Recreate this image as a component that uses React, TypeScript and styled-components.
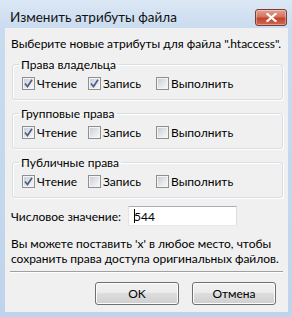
import React from "react";
import styled, { createGlobalStyle } from "styled-components";

const Global = createGlobalStyle`
  html, body { margin: 0; padding: 0; background: #c6d9ee; }
  * { box-sizing: border-box; }
`;

const FONT = `Lato, "Noto Sans", sans-serif`;

const Window = styled.div`
  width: 292px;
  height: 317px;
  display: flex;
  flex-direction: column;
  padding: 0 4px 5px 5px;
  background: linear-gradient(180deg, #dbe7f4 0px, #c9dbef 30px, #bfd4ec 100%);
  font-family: ${FONT};
  font-size: 12px;
  color: #000;
  white-space: nowrap;
`;

const TitleBar = styled.div`
  height: 28px;
  flex: none;
  display: flex;
  justify-content: space-between;
  align-items: flex-start;
  padding: 9px 1px 0 5px;
`;

const Title = styled.div`
  line-height: 17px;
  font-size: 13.5px;
  color: #111;
`;

const CloseButton = styled.div`
  width: 32px;
  height: 17px;
  border: 1px solid #7a3b3b;
  border-radius: 3px;
  background: linear-gradient(180deg, #e4a192 0%, #d4735f 45%, #c2432c 55%, #cf6a52 100%);
  display: flex;
  align-items: center;
  justify-content: center;
  box-shadow: inset 0 0 0 1px rgba(255, 255, 255, 0.35);
`;

const Client = styled.div`
  flex: 1;
  display: flex;
  flex-direction: column;
  background: #f0f0f0;
  padding: 8px 5px 0 6px;
`;

const Text = styled.div`
  line-height: 15px;
`;

const Group = styled.fieldset`
  margin: 6px 0 0 1px;
  padding: 4px 8px 8px 9px;
  border: 1px solid #d5dfe5;
  border-radius: 3px;
  box-shadow: inset 1px 1px 0 #fff, 1px 1px 0 #fff;
`;

const Legend = styled.legend`
  padding: 0 2px;
  margin-left: -3px;
  line-height: 15px;
`;

const CheckRow = styled.div`
  display: grid;
  grid-template-columns: 66px 68px auto;
`;

const CheckItem = styled.label`
  display: flex;
  align-items: center;
  gap: 2px;
  line-height: 15px;
`;

const Box = styled.span`
  width: 13px;
  height: 13px;
  flex: none;
  border: 1px solid #8e8f8f;
  background: #f4f4f4;
  display: flex;
  align-items: center;
  justify-content: center;
`;

const BoxInner = styled.span`
  width: 11px;
  height: 11px;
  border: 1px solid #f4f4f4;
  background: linear-gradient(135deg, #cbcfd5 0%, #e6e8eb 60%, #f6f6f6 100%);
  display: flex;
  align-items: center;
  justify-content: center;
`;

const ValueRow = styled.div`
  display: flex;
  align-items: center;
  margin-top: 8px;
`;

const ValueLabel = styled.div`
  width: 117px;
  line-height: 15px;
`;

const Input = styled.div`
  width: 109px;
  height: 20px;
  background: #fff;
  border: 1px solid #abadb3;
  border-color: #abadb3 #dbdfe6 #e3e9ef #e2e3ea;
  display: flex;
  align-items: center;
  padding-left: 5px;
  line-height: 15px;
`;

const Caret = styled.span`
  width: 1px;
  height: 14px;
  background: #000;
  margin-right: -1px;
`;

const Hint = styled.div`
  margin-top: 10px;
  line-height: 15px;
`;

const Separator = styled.div`
  margin: 5px 0 0 -1px;
  height: 2px;
  border-top: 1px solid #a0a0a0;
  border-bottom: 1px solid #fff;
  width: 273px;
`;

const Buttons = styled.div`
  display: flex;
  justify-content: flex-end;
  gap: 13px;
  margin-top: 9px;
  padding-right: 7px;
`;

const Button = styled.div`
  width: 84px;
  height: 23px;
  border: 1px solid #707070;
  border-radius: 3px;
  background: linear-gradient(180deg, #f2f2f2 0%, #ebebeb 49%, #dddddd 50%, #cfcfcf 100%);
  box-shadow: inset 0 0 0 1px #fcfcfc;
  display: flex;
  align-items: center;
  justify-content: center;
  line-height: 15px;
`;

const Check = () => (
  <svg width="9" height="9" viewBox="0 0 9 9">
    <path d="M1 4.5 L3.5 7.5 L8 0.8" fill="none" stroke="#4c5f8c" strokeWidth="1.7" />
  </svg>
);

const Checkbox: React.FC<{ checked?: boolean; label: string }> = ({ checked, label }) => (
  <CheckItem>
    <Box>
      <BoxInner>{checked && <Check />}</BoxInner>
    </Box>
    {label}
  </CheckItem>
);

const PermGroup: React.FC<{ title: string; r: boolean; w: boolean; x: boolean }> = ({ title, r, w, x }) => (
  <Group>
    <Legend>{title}</Legend>
    <CheckRow>
      <Checkbox checked={r} label="Чтение" />
      <Checkbox checked={w} label="Запись" />
      <Checkbox checked={x} label="Выполнить" />
    </CheckRow>
  </Group>
);

export default function App() {
  return (
    <>
      <Global />
      <Window>
        <TitleBar>
          <Title>Изменить атрибуты файла</Title>
          <CloseButton>
            <svg width="11" height="9" viewBox="0 0 11 9">
              <path d="M1.5 1 L9.5 8 M9.5 1 L1.5 8" stroke="#fff" strokeWidth="2.2" strokeLinecap="square" />
            </svg>
          </CloseButton>
        </TitleBar>
        <Client>
          <Text>Выберите новые атрибуты для файла ".htaccess".</Text>
          <PermGroup title="Права владельца" r w={true} x={false} />
          <PermGroup title="Групповые права" r w={false} x={false} />
          <PermGroup title="Публичные права" r w={false} x={false} />
          <ValueRow>
            <ValueLabel>Числовое значение:</ValueLabel>
            <Input>
              <Caret />
              544
            </Input>
          </ValueRow>
          <Hint>
            Вы можете поставить 'x' в любое место, чтобы
            <br />
            сохранить права доступа оригинальных файлов.
          </Hint>
          <Separator />
          <Buttons>
            <Button>OK</Button>
            <Button>Отмена</Button>
          </Buttons>
        </Client>
      </Window>
    </>
  );
}
